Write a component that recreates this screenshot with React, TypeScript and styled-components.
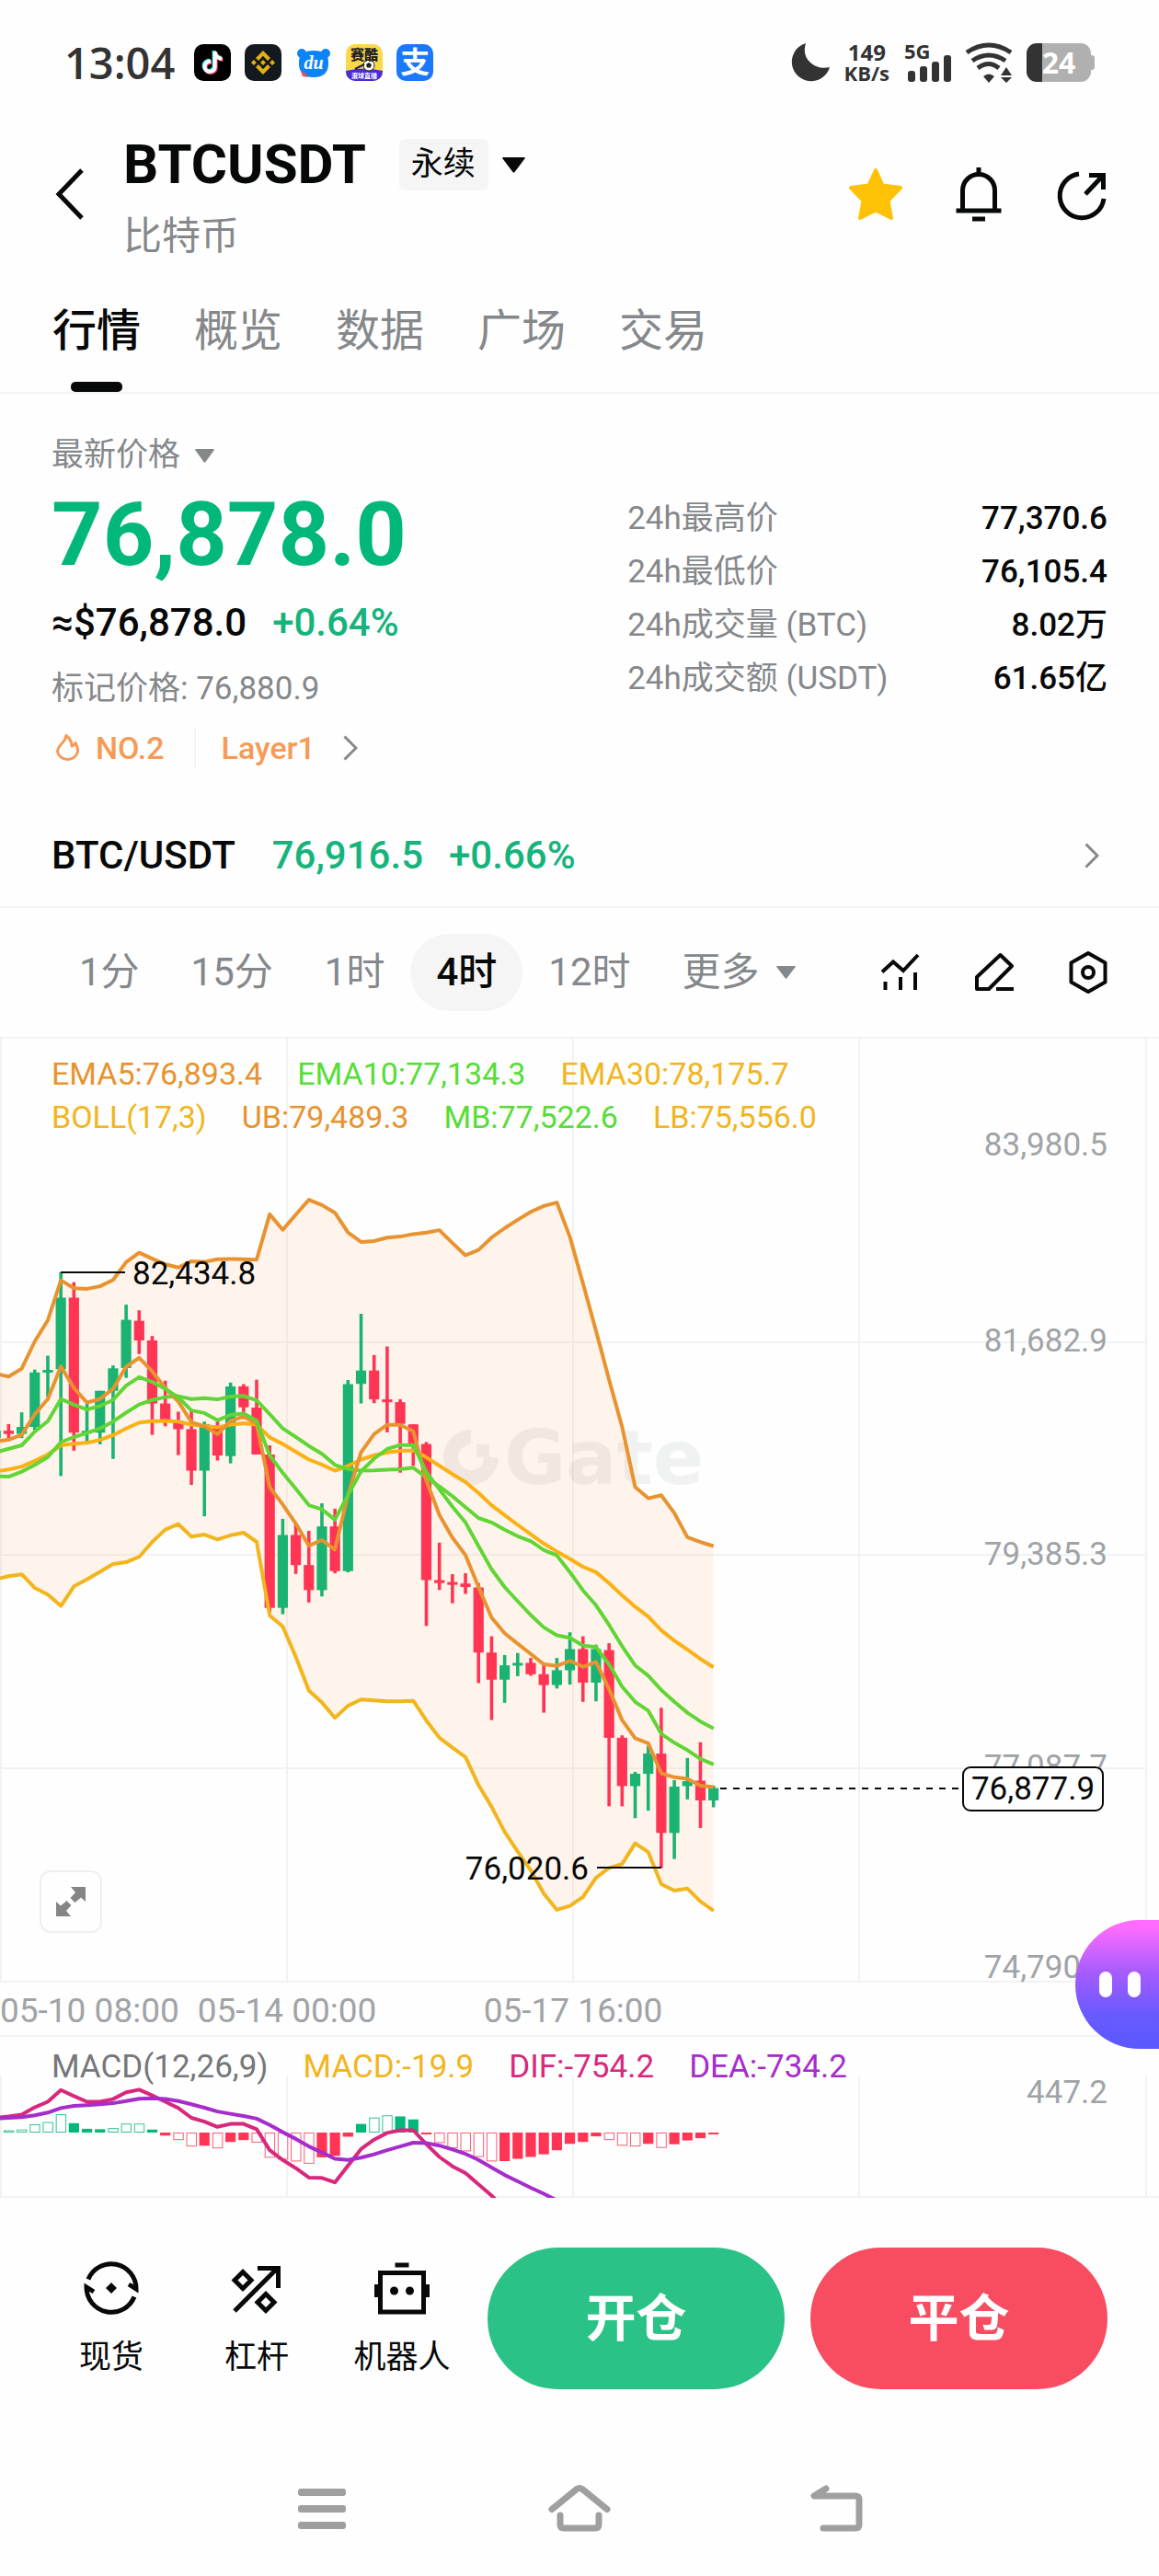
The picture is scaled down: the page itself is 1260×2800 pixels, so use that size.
import React, { useState } from "react";
import styled, { createGlobalStyle } from "styled-components";
import { FaTiktok } from "react-icons/fa";
import { SiBinance } from "react-icons/si";

const FONT = `Roboto, "Noto Sans CJK SC", sans-serif`;

const C = {
  ink: "#070808",
  grey: "#85888b",
  axis: "#a0a3a6",
  line: "#f3f4f4",
  up: "#02b77a",
  upText: "#16b37c",
  upCandle: "#1bb371",
  down: "#ff3553",
  orange: "#f79a55",
  ub: "#e8932f",
  lb: "#f2b51d",
  mid: "#62d536",
  dif: "#d8287c",
  dea: "#a62ccb",
};

const GlobalStyle = createGlobalStyle`
  *, *::before, *::after { box-sizing: border-box; }
  body { margin: 0; background: #fefefe; color: ${C.ink}; font-family: ${FONT}; }
  button, select { font: inherit; color: inherit; background: none; border: 0; margin: 0; padding: 0; cursor: pointer; }
  svg { display: block; flex: none; }
  dl, dd, dt, h1, p { margin: 0; }
`;

const Page = styled.div`
  position: relative;
  display: flex;
  flex-direction: column;
  min-height: 100vh;
`;

/* ---------- status bar ---------- */
const StatusBar = styled.div`
  display: flex;
  align-items: center;
  justify-content: space-between;
  padding: 46px 70px 49px 70px;
  color: #333;
`;
const StatusGroup = styled.div`
  display: flex;
  align-items: center;
  gap: 15px;
  height: 44px;
`;
const Clock = styled.span`
  font: 600 47px/44px "Open Sans", sans-serif;
  padding-right: 6px;
`;
const AppTile = styled.span<{ $bg: string }>`
  position: relative;
  display: flex;
  align-items: center;
  justify-content: center;
  width: 40px;
  height: 40px;
  border-radius: 10px;
  overflow: hidden;
  background: ${(p) => p.$bg};
  color: #fff;
  font: 700 32px/40px ${FONT};
`;
const TikTokLayer = styled(FaTiktok)<{ $shift: number }>`
  position: absolute;
  left: ${(p) => 8 + p.$shift}px;
  top: ${(p) => 8 + p.$shift}px;
`;
const NetSpeed = styled.span`
  display: flex;
  flex-direction: column;
  align-items: center;
  font: 700 24px/22px "Open Sans", sans-serif;
`;
const NetUnit = styled.span`
  font-size: 22px;
`;
const Battery = styled.span`
  position: relative;
  width: 70px;
  height: 42px;
  margin-right: 4px;
  border-radius: 11px;
  background: linear-gradient(90deg, #333 24%, #b0b0b0 24%);
  color: #fff;
  font: 700 32px/42px "Open Sans", sans-serif;
  text-align: center;
  &::after {
    content: "";
    position: absolute;
    right: -4px;
    top: 13px;
    width: 4px;
    height: 16px;
    border-radius: 0 3px 3px 0;
    background: #b0b0b0;
  }
`;

/* ---------- header ---------- */
const Header = styled.header`
  display: flex;
  align-items: center;
  padding: 0 54px 0 60px;
`;
const IconButton = styled.button`
  display: flex;
  align-items: center;
  justify-content: center;
`;
const TitleBlock = styled.div`
  flex: 1;
  display: flex;
  flex-direction: column;
  gap: 12px;
  padding-left: 42px;
`;
const TitleRow = styled.div`
  display: flex;
  align-items: center;
`;
const Title = styled.h1`
  font-size: 60px;
  line-height: 80px;
  font-weight: 700;
`;
const Subtitle = styled.p`
  font-size: 42px;
  line-height: 52px;
  color: ${C.grey};
`;
const Actions = styled.div`
  display: flex;
  gap: 52px;
`;
const Picker = styled.label<{ $chip?: boolean }>`
  display: flex;
  align-items: center;
  gap: 15px;
  color: ${(p) => (p.$chip ? C.ink : C.grey)};
  margin-left: ${(p) => (p.$chip ? 36 : 0)}px;
`;
const PickerSelect = styled.select<{ $chip?: boolean }>`
  appearance: none;
  outline: none;
  font-size: 35px;
  line-height: 40px;
  padding: ${(p) => (p.$chip ? "8px 13px" : "0")};
  border-radius: 6px;
  background: ${(p) => (p.$chip ? "#f5f5f5" : "transparent")};
`;

/* ---------- tabs ---------- */
const Tabs = styled.nav`
  display: flex;
  gap: 58px;
  padding: 0 57px;
  border-bottom: 2px solid ${C.line};
`;
const Tab = styled.button<{ $on: boolean }>`
  position: relative;
  padding: 53px 0 42px;
  font-size: 48px;
  line-height: 48px;
  font-weight: ${(p) => (p.$on ? 500 : 400)};
  color: ${(p) => (p.$on ? C.ink : C.grey)};
  &::after {
    content: "";
    position: absolute;
    left: 50%;
    bottom: 0;
    width: 56px;
    height: 11px;
    margin-left: -28px;
    border-radius: 5px;
    background: ${(p) => (p.$on ? C.ink : "transparent")};
  }
`;

/* ---------- price summary ---------- */
const Summary = styled.section`
  display: grid;
  grid-template-columns: 6fr 5fr;
  padding: 47px 56px 39px;
`;
const PriceColumn = styled.div`
  display: flex;
  flex-direction: column;
  align-items: flex-start;
  gap: 24px;
`;
const BigPrice = styled.p`
  font-size: 97px;
  line-height: 84px;
  font-weight: 700;
  color: ${C.up};
`;
const Quote = styled.p`
  display: flex;
  gap: 28px;
  font-size: 42px;
  line-height: 60px;
  font-weight: 500;
`;
const Gain = styled.span`
  color: ${C.upText};
`;
const MarkPrice = styled.p`
  font-size: 35px;
  line-height: 36px;
  color: ${C.grey};
`;
const RankLink = styled.a`
  display: flex;
  align-items: center;
  font-size: 34px;
  line-height: 44px;
  font-weight: 500;
  color: ${C.orange};
  text-decoration: none;
`;
const RankName = styled.span`
  padding: 0 32px 0 14px;
`;
const Category = styled.span`
  padding: 0 30px 0 28px;
  border-left: 2px solid ${C.line};
`;
const Stats = styled.dl`
  padding-top: 60px;
`;
const StatRow = styled.div`
  display: flex;
  justify-content: space-between;
  font-size: 35px;
  line-height: 58px;
`;
const StatName = styled.dt`
  color: ${C.grey};
`;
const StatValue = styled.dd`
  font-weight: 500;
`;

const PairLink = styled.a`
  display: flex;
  align-items: center;
  padding: 0 65px 0 56px;
  border-bottom: 2px solid ${C.line};
  font-size: 42px;
  line-height: 111px;
  font-weight: 500;
  color: ${C.ink};
  text-decoration: none;
`;
const PairPrice = styled(Gain)`
  padding: 0 28px 0 40px;
`;
const Spacer = styled.span`
  flex: 1;
`;

/* ---------- interval toolbar ---------- */
const Toolbar = styled.div`
  display: flex;
  align-items: center;
  justify-content: space-between;
  padding: 28px 55px 28px 58px;
  border-bottom: 2px solid ${C.line};
`;
const Intervals = styled.div`
  display: flex;
`;
const Interval = styled.button<{ $on: boolean }>`
  display: flex;
  align-items: center;
  gap: 18px;
  padding: 0 28px;
  border-radius: 42px;
  font-size: 42px;
  line-height: 84px;
  white-space: nowrap;
  font-weight: ${(p) => (p.$on ? 500 : 400)};
  color: ${(p) => (p.$on ? C.ink : C.grey)};
  background: ${(p) => (p.$on ? "#f5f5f5" : "transparent")};
`;
const ToolIcons = styled.div`
  display: flex;
  gap: 58px;
`;

/* ---------- chart ---------- */
const ChartArea = styled.section`
  position: relative;
`;
const ChartSvg = styled.svg`
  width: 100%;
  height: auto;
  font-family: ${FONT};
  font-size: 35px;
`;
const Legend = styled.div<{ $top: number; $size: number }>`
  position: absolute;
  top: ${(p) => p.$top}px;
  left: 56px;
  font-size: ${(p) => p.$size}px;
  line-height: 47px;
`;
const LegendRow = styled.div`
  display: flex;
  gap: 38px;
`;
const LegendItem = styled.span<{ $color: string }>`
  color: ${(p) => p.$color};
`;
const ExpandButton = styled.button`
  position: absolute;
  left: 43px;
  bottom: 113px;
  width: 68px;
  height: 68px;
  display: flex;
  align-items: center;
  justify-content: center;
  border: 2px solid #eeefef;
  border-radius: 12px;
  background: #fefefe;
`;
const Assistant = styled.button`
  position: absolute;
  z-index: 1;
  right: 0;
  bottom: -13px;
  display: flex;
  align-items: center;
  gap: 17px;
  width: 91px;
  height: 140px;
  padding-left: 26px;
  border-radius: 70px 0 0 70px;
  background: linear-gradient(180deg, #ff6cff 5%, #a35bff 42%, #6a5aff 72%, #5a58ff 100%);
`;
const Eye = styled.span`
  width: 14px;
  height: 28px;
  border-radius: 7px;
  background: #fff;
`;

/* ---------- bottom ---------- */
const TradeBar = styled.div`
  display: flex;
  align-items: center;
  padding: 54px 56px 60px 42px;
`;
const Shortcut = styled.button`
  width: 158px;
  display: flex;
  flex-direction: column;
  align-items: center;
  gap: 26px;
  font-size: 35px;
  line-height: 40px;
`;
const TradeButtons = styled.div`
  flex: 1;
  display: flex;
  gap: 28px;
  padding-left: 14px;
`;
const TradeButton = styled.button<{ $bg: string }>`
  flex: 1;
  border-radius: 77px;
  background: ${(p) => p.$bg};
  color: #fff;
  font-size: 55px;
  line-height: 154px;
  font-weight: 700;
`;
const SystemNav = styled.nav`
  display: flex;
  justify-content: center;
  gap: 210px;
  padding: 43px 0;
`;

/* ---------- small drawings ---------- */
const Triangle = ({ w, h }: { w: number; h: number }) => (
  <svg width={w} height={h} viewBox="0 0 24 16" preserveAspectRatio="none" fill="currentColor">
    <path d="M1 0H23Q24.5 0 23.5 1.5L12.8 15.4Q12 16.3 11.200 15.4L.5 1.500Q-.5 0 1 0Z" />
  </svg>
);
const ChevronRight = () => (
  <svg width="16" height="28" viewBox="0 0 16 28" fill="none" stroke={C.grey} strokeWidth="3">
    <path d="M1.500 1.500L14 14L1.500 26.500" />
  </svg>
);

/* ---------- chart data ---------- */
const CHART_H = 1085;
const PLOT_TOP = 131;
const EARLY = 0.3444;
const LATE = 0.5357;
const xAt = (i: number) => 9.4 + i * 14.19;
const scaled = (k: number, v: number[]) => v.map((n) => PLOT_TOP + n * k);

/* rising flag, then high, body top, body bottom and low */
type Candle = [up: 0 | 1, high: number, top: number, bottom: number, low: number];
const earlyCandles: Candle[] = [
  [1, 857, 857, 880, 880], [0, 836, 857, 867, 890], [1, 799, 845, 867, 880], [1, 664, 673, 845, 855],
  [1, 620, 665, 673, 750], [1, 357, 437, 663, 1000], [0, 388, 437, 863, 920], [1, 772, 857, 863, 892],
  [1, 731, 731, 863, 900], [1, 651, 660, 731, 946], [1, 459, 507, 659, 690], [0, 477, 510, 572, 615],
  [0, 558, 572, 771, 870], [0, 699, 771, 826, 843], [0, 797, 826, 852, 934], [0, 790, 852, 983, 1028],
  [1, 828, 836, 983, 1127], [0, 826, 840, 935, 951], [1, 705, 717, 937, 960], [0, 710, 717, 783, 820],
  [0, 696, 784, 932, 932], [0, 903, 932, 1416, 1430], [1, 1135, 1186, 1416, 1436], [0, 1150, 1186, 1281, 1309],
  [0, 1173, 1281, 1360, 1399], [1, 1086, 1159, 1360, 1380], [0, 1103, 1159, 1300, 1307], [1, 697, 710, 1300, 1304],
  [1, 488, 667, 709, 771], [0, 618, 667, 758, 770], [0, 591, 758, 767, 862],
];
const lateCandles: Candle[] = [
  [0, 487, 493, 537, 636], [0, 538, 538, 578, 622], [0, 574, 578, 854, 947], [0, 778, 854, 860, 874],
  [0, 842, 858, 863, 901], [0, 840, 861, 868, 882], [0, 860, 869, 1001, 1063], [0, 968, 1001, 1056, 1138],
  [1, 1006, 1027, 1056, 1103], [1, 1002, 1022, 1027, 1049], [0, 1012, 1022, 1045, 1048], [0, 1022, 1045, 1067, 1123],
  [1, 1012, 1037, 1067, 1074], [1, 960, 994, 1037, 1066], [0, 968, 994, 1062, 1101], [1, 985, 994, 1062, 1100],
  [0, 982, 996, 1174, 1313], [0, 1169, 1174, 1272, 1313], [1, 1243, 1247, 1272, 1337], [1, 1190, 1206, 1247, 1322],
  [0, 1113, 1206, 1367, 1438], [1, 1260, 1273, 1367, 1420], [1, 1215, 1262, 1272, 1299], [0, 1183, 1261, 1301, 1357],
  [1, 1271, 1276, 1301, 1315],
];
const toPlot = (k: number) => ([up, ...v]: Candle) => ({ up, y: scaled(k, v) });
const candles = [...earlyCandles.map(toPlot(EARLY)), ...lateCandles.map(toPlot(LATE))];

/* every series starts one interval before the left edge */
const series = {
  ub: [
    ...scaled(EARLY, [677, 686, 661, 575, 508, 382, 407, 409, 401, 381, 325, 295, 314, 332, 342, 322, 324, 316, 315, 316, 317, 174, 223, 175, 128, 145, 169, 231, 261, 258]),
    ...scaled(LATE, [159, 157, 152, 149, 144, 170, 195, 184, 159, 140, 123, 107, 95, 88, 158, 252, 348, 447, 543, 665, 688, 682, 718, 767, 777, 785]),
  ],
  lb: [
    ...scaled(EARLY, [1326, 1316, 1310, 1353, 1374, 1410, 1348, 1326, 1302, 1278, 1272, 1255, 1208, 1169, 1152, 1191, 1185, 1200, 1187, 1179, 1208, 1440, 1475, 1571, 1677, 1715, 1763, 1725, 1705, 1708]),
    ...scaled(LATE, [1100, 1100, 1099, 1139, 1174, 1194, 1213, 1270, 1314, 1365, 1405, 1443, 1490, 1523, 1515, 1497, 1458, 1438, 1430, 1388, 1406, 1471, 1484, 1480, 1506, 1525]),
  ],
  ema5: [
    ...scaled(EARLY, [891, 885, 870, 805, 757, 654, 722, 768, 757, 725, 655, 627, 670, 722, 765, 830, 843, 868, 826, 812, 835, 1035, 1090, 1150, 1220, 1202, 1232, 1060, 925, 868]),
    ...scaled(LATE, [539, 539, 552, 652, 722, 768, 803, 868, 930, 962, 983, 1004, 1025, 1028, 1018, 1030, 1020, 1075, 1138, 1175, 1185, 1246, 1254, 1257, 1271, 1274]),
  ],
  ema10: [
    ...scaled(EARLY, [925, 914, 903, 860, 827, 757, 775, 790, 779, 760, 715, 688, 703, 725, 752, 793, 801, 824, 807, 803, 825, 935, 990, 1040, 1092, 1105, 1138, 1060, 985, 945]),
    ...scaled(LATE, [588, 580, 580, 635, 670, 705, 737, 785, 832, 868, 897, 925, 950, 966, 971, 987, 990, 1025, 1070, 1101, 1119, 1166, 1184, 1199, 1217, 1228]),
  ],
  mb: [
    ...scaled(EARLY, [1001, 1002, 986, 965, 940, 893, 877, 864, 850, 828, 800, 774, 760, 751, 748, 757, 754, 758, 749, 747, 761, 805, 850, 877, 905, 930, 965, 978, 983, 982]),
    ...scaled(LATE, [630, 629, 626, 646, 664, 684, 706, 728, 737, 752, 765, 775, 793, 804, 838, 875, 905, 945, 988, 1027, 1048, 1077, 1101, 1123, 1141, 1155]),
  ],
  ema30: [
    ...scaled(EARLY, [986, 979, 970, 952, 932, 903, 898, 895, 886, 871, 850, 831, 827, 826, 828, 838, 842, 846, 838, 833, 838, 878, 899, 923, 948, 964, 983, 968, 948, 935]),
    ...scaled(LATE, [595, 592, 591, 605, 622, 639, 655, 677, 702, 722, 742, 761, 780, 796, 811, 827, 838, 860, 885, 908, 928, 956, 977, 995, 1014, 1031]),
  ],
};
const toPoints = (ys: number[]) => ys.map((y, i) => `${xAt(i - 1).toFixed(1)},${y.toFixed(1)}`);
const band = [...toPoints(series.ub), ...toPoints(series.lb).reverse()].join(" ");

const GRID_X = [1, 312, 623, 934, 1246];
const AXIS = [
  { label: "83,980.5", y: 115 },
  { label: "81,682.9", y: 328, line: 330 },
  { label: "79,385.3", y: 560, line: 561 },
  { label: "77,087.7", y: 791, line: 793 },
  { label: "74,790.1", y: 1009, line: 1025 },
];

/* signed height, then 1 for a filled bar or 0 for an outlined one */
const macdBars: [number, 0 | 1][] = [
  [6, 0], [8, 0], [22, 0], [28, 0], [49, 0], [25, 1], [10, 1], [9, 1], [12, 0], [24, 0], [24, 0], [8, 1],
  [-8, 1], [-20, 0], [-37, 0], [-35, 1], [-42, 0], [-25, 1], [-20, 1], [-27, 0], [-67, 0], [-72, 0], [-77, 0],
  [-83, 0], [-66, 1], [-62, 1], [-11, 1], [23, 1], [40, 0], [46, 0], [43, 1], [35, 1], [-3, 1], [-28, 0],
  [-42, 0], [-50, 0], [-65, 0], [-77, 0], [-76, 1], [-70, 1], [-65, 1], [-58, 1], [-47, 1], [-30, 1], [-25, 1],
  [-10, 1], [-20, 0], [-35, 0], [-37, 0], [-30, 1], [-41, 0], [-31, 1], [-21, 1], [-15, 1], [-5, 1],
];
const macdScale = (v: number[]) => v.map((n) => n / 2.45 - 454);
const dif = macdScale([1328, 1324, 1319, 1300, 1285, 1254, 1270, 1285, 1285, 1278, 1260, 1253, 1268, 1285, 1302, 1328, 1338, 1352, 1344, 1344, 1358, 1414, 1440, 1462, 1487, 1488, 1500, 1455, 1411, 1386, 1368, 1361, 1361, 1398, 1432, 1457, 1475, 1505, 1535, 1570]);
const dea = macdScale([1330, 1328, 1326, 1321, 1314, 1302, 1296, 1294, 1292, 1289, 1283, 1277, 1276, 1278, 1283, 1292, 1301, 1311, 1317, 1323, 1330, 1347, 1366, 1384, 1404, 1420, 1437, 1440, 1434, 1425, 1414, 1404, 1394, 1395, 1402, 1412, 1424, 1440, 1460, 1480, 1497, 1514, 1530, 1548, 1566]);

const Line = ({ ys, color }: { ys: number[]; color: string }) => (
  <polyline points={toPoints(ys).join(" ")} fill="none" stroke={color} strokeWidth="4" strokeLinejoin="round" />
);

const CandleChart = () => (
  <ChartSvg viewBox={`0 0 1260 ${CHART_H}`} role="img" aria-label="BTCUSDT 4时 K线">
    <g stroke="#f1f2f2" strokeWidth="2">
      {GRID_X.map((x) => <path key={x} d={`M${x} 0V1025`} />)}
      {AXIS.map((a) => a.line && <path key={a.label} d={`M0 ${a.line}H1246`} />)}
      <path d={`M0 ${CHART_H - 1}H1260`} />
    </g>
    <polygon points={band} fill="#ff9a40" fillOpacity="0.1" />
    <g fill="#8b9696" fillOpacity="0.12">
      <path d="M512 425A30 30 0 1 0 542 455H526A14 14 0 1 1 512 441Z" />
      <path d="M518 441H532V455H518Z" />
      <text x="548" y="484" fontFamily="DejaVu Sans" fontWeight="700" fontSize="82">Gate</text>
    </g>
    {candles.map(({ up, y: [high, top, bottom, low] }, i) => {
      const x = xAt(i - 1);
      return (
        <g key={i} fill={up ? C.upCandle : C.down}>
          <rect x={x - 1.8} y={high} width="3.600" height={low - high} />
          <rect x={x - 5.6} y={top} width="11.200" height={Math.max(3, bottom - top)} />
        </g>
      );
    })}
    <Line ys={series.ub} color={C.ub} />
    <Line ys={series.lb} color={C.lb} />
    <Line ys={series.ema30} color="#fbb014" />
    <Line ys={series.mb} color={C.mid} />
    <Line ys={series.ema5} color={C.ub} />
    <Line ys={series.ema10} color={C.mid} />
    <g fill={C.axis} textAnchor="end">
      {AXIS.map((a) => <text key={a.label} x="1204" y={a.y + 12}>{a.label}</text>)}
    </g>
    <g fill={C.axis} fontSize="37">
      <text x="0" y="1069">05-10 08:00</text>
      <text x="312" y="1069" textAnchor="middle">05-14 00:00</text>
      <text x="623" y="1069" textAnchor="middle">05-17 16:00</text>
    </g>
    <g stroke={C.ink} strokeWidth="2">
      <path d="M66 254H136" />
      <path d="M649 901H719" />
      <path d="M783 815H1046" strokeDasharray="7 7" />
      <rect x="1047" y="792" width="152" height="47" rx="8" fill="#fefefe" />
    </g>
    <g fill={C.ink}>
      <text x="144" y="267">82,434.8</text>
      <text x="640" y="914" textAnchor="end">76,020.6</text>
      <text x="1123" y="827" textAnchor="middle">76,877.9</text>
    </g>
  </ChartSvg>
);

const MacdChart = () => (
  <ChartSvg viewBox="0 0 1260 175" role="img" aria-label="MACD">
    <g stroke="#f1f2f2" strokeWidth="2">
      {GRID_X.map((x) => <path key={x} d={`M${x} 42V174`} />)}
      <path d="M0 174H1260" />
    </g>
    {macdBars.map(([v, filled], i) => {
      const color = v > 0 ? C.up : C.down;
      const h = Math.abs(v) / 2.45;
      const y = v > 0 ? 104 - h : 104;
      return filled ? (
        <rect key={i} x={xAt(i) - 5.6} y={y} width="11.200" height={Math.max(2, h)} fill={color} />
      ) : (
        <rect key={i} x={xAt(i) - 5} y={y + 0.5} width="10.400" height={Math.max(1, h - 1)} fill="#fefefe" stroke={color} strokeOpacity="0.8" />
      );
    })}
    <Line ys={dif} color={C.dif} />
    <Line ys={dea} color={C.dea} />
    <text x="1204" y="72" textAnchor="end" fill={C.axis}>447.2</text>
  </ChartSvg>
);

const TABS = ["行情", "概览", "数据", "广场", "交易"];
const STATS = [
  ["24h最高价", "77,370.6"],
  ["24h最低价", "76,105.4"],
  ["24h成交量 (BTC)", "8.02万"],
  ["24h成交额 (USDT)", "61.65亿"],
];
const INTERVALS = ["1分", "15分", "1时", "4时", "12时"];

export default function App() {
  const [tab, setTab] = useState("行情");
  const [interval, setInterval] = useState("4时");

  return (
    <Page>
      <GlobalStyle />

      <StatusBar>
        <StatusGroup>
          <Clock>13:04</Clock>
          <AppTile $bg="#000">
            <TikTokLayer size={24} color="#25f4ee" $shift={-1} />
            <TikTokLayer size={24} color="#fe2c55" $shift={1} />
            <TikTokLayer size={24} color="#fff" $shift={0} />
          </AppTile>
          <AppTile $bg="#14191f"><SiBinance size={26} color="#e5b012" /></AppTile>
          <AppTile $bg="#fff">
            <svg width="40" height="40" viewBox="0 0 40 40">
              <circle cx="7" cy="10" r="5" fill="#0b84f8" />
              <circle cx="33" cy="10" r="5" fill="#0b84f8" />
              <path d="M4 19Q4 7 20 7T36 19Q37 36 20 36T4 19Z" fill="#0b84f8" />
              <path d="M6 29Q12 31 14 36L8 35Z" fill="#e8505b" />
              <text x="20" y="27" textAnchor="middle" fill="#fff" fontFamily="Liberation Serif" fontStyle="italic" fontWeight="700" fontSize="20">du</text>
            </svg>
          </AppTile>
          <AppTile $bg="#fbd84b">
            <svg width="40" height="40" viewBox="0 0 40 40">
              <path d="M0 29Q20 24 40 29V40H0Z" fill="#4a2bd8" />
              <circle cx="25" cy="23" r="6" fill="#fff" stroke="#222" />
              <path d="M25 20L28 22L27 25.500H23L22 22Z" fill="#222" />
              <path d="M10 27L20 22" stroke="#222" strokeWidth="2" />
              <text x="20" y="17" textAnchor="middle" fill="#222" fontFamily="Noto Sans CJK SC" fontWeight="900" fontSize="15">赛酷</text>
              <text x="20" y="37" textAnchor="middle" fill="#fff" fontFamily="Noto Sans CJK SC" fontWeight="700" fontSize="7">滚球直播</text>
            </svg>
          </AppTile>
          <AppTile $bg="#1b78fb">支</AppTile>
        </StatusGroup>
        <StatusGroup>
          <svg width="44" height="44" viewBox="0 0 44 44" fill="#333"><path d="M17 1A21 21 0 1 0 43 27Q31 30 22 22T17 1Z" /></svg>
          <NetSpeed>149<NetUnit>KB/s</NetUnit></NetSpeed>
          <svg width="52" height="60" viewBox="0 -8 52 60" fill="#333">
            <text x="1" y="18" fontFamily="Open Sans" fontWeight="700" fontSize="22">5G</text>
            <rect x="5" y="31" width="8" height="12" rx="3" />
            <rect x="18" y="26" width="8" height="17" rx="3" />
            <rect x="31" y="21" width="8" height="22" rx="3" />
            <rect x="44" y="14" width="8" height="29" rx="3" />
          </svg>
          <svg width="52" height="44" viewBox="0 0 52 44" fill="none" stroke="#333" strokeWidth="5">
            <path d="M2 11Q26 -5 50 11M8 20Q26 8 44 20M14 28Q26 19 37 28" />
            <path d="M20 37Q26 32 32 37L26 44Z" fill="#333" stroke="none" />
            <path d="M39 36L45 27L51 36ZM39 38L45 44L51 38Z" fill="#333" stroke="none" />
          </svg>
          <Battery>24</Battery>
        </StatusGroup>
      </StatusBar>

      <Header>
        <IconButton aria-label="返回">
          <svg width="32" height="56" viewBox="0 0 32 56" fill="none" stroke={C.ink} strokeWidth="5"><path d="M29 2L4 28L29 54" /></svg>
        </IconButton>
        <TitleBlock>
          <TitleRow>
            <Title>BTCUSDT</Title>
            <Picker $chip>
              <PickerSelect $chip aria-label="合约类型"><option>永续</option></PickerSelect>
              <Triangle w={25} h={17} />
            </Picker>
          </TitleRow>
          <Subtitle>比特币</Subtitle>
        </TitleBlock>
        <Actions>
          <IconButton aria-label="收藏">
            <svg width="60" height="60" viewBox="0 0 60 60" fill="#ffc105" stroke="#ffc105" strokeWidth="4" strokeLinejoin="round">
              <path d="M30 4L37.500 20.500L57 23L43.500 37L47 56L30 47.500L13 56L16.500 37L3 23L22.500 20.500Z" />
            </svg>
          </IconButton>
          <IconButton aria-label="提醒">
            <svg width="60" height="60" viewBox="0 0 60 60" fill="none" stroke={C.ink} strokeWidth="5">
              <path d="M12.500 47V26A17.500 17.500 0 0 1 47.500 26V47M5.500 48H54.500M30 1V9M23 57H37" />
            </svg>
          </IconButton>
          <IconButton aria-label="分享">
            <svg width="60" height="60" viewBox="0 0 60 60" fill="none" stroke={C.ink} strokeWidth="5">
              <path d="M27 8A24 24 0 1 0 54 35M34 30L52 11M38 9.500H53.500V25" />
            </svg>
          </IconButton>
        </Actions>
      </Header>

      <Tabs>
        {TABS.map((t) => <Tab key={t} $on={t === tab} onClick={() => setTab(t)}>{t}</Tab>)}
      </Tabs>

      <Summary>
        <PriceColumn>
          <Picker>
            <PickerSelect aria-label="价格类型"><option>最新价格</option></PickerSelect>
            <Triangle w={21} h={15} />
          </Picker>
          <BigPrice>76,878.0</BigPrice>
          <Quote>≈$76,878.0<Gain>+0.64%</Gain></Quote>
          <MarkPrice>标记价格: 76,880.9</MarkPrice>
          <RankLink href="#rank">
            <svg width="34" height="32" viewBox="0 0 34 32" fill="none" stroke={C.orange} strokeWidth="3" strokeLinejoin="round">
              <path d="M16 2.500Q22 7 22 14Q25 13 26 10.500Q29 16 28.500 20A11.200 10.500 0 0 1 6.500 20Q7 15 11.500 11Q14.500 8 16 2.500Z" />
            </svg>
            <RankName>NO.2</RankName>
            <Category>Layer1</Category>
            <ChevronRight />
          </RankLink>
        </PriceColumn>
        <Stats>
          {STATS.map(([k, v]) => (
            <StatRow key={k}><StatName>{k}</StatName><StatValue>{v}</StatValue></StatRow>
          ))}
        </Stats>
      </Summary>

      <PairLink href="#spot">
        BTC/USDT<PairPrice>76,916.5</PairPrice><Gain>+0.66%</Gain>
        <Spacer />
        <ChevronRight />
      </PairLink>

      <Toolbar>
        <Intervals>
          {INTERVALS.map((t) => <Interval key={t} $on={t === interval} onClick={() => setInterval(t)}>{t}</Interval>)}
          <Interval $on={false} aria-haspopup="menu">更多<Triangle w={21} h={14} /></Interval>
        </Intervals>
        <ToolIcons>
          <IconButton aria-label="指标">
            <svg width="44" height="48" viewBox="0 -2 44 48" fill="none" stroke={C.ink} strokeWidth="4">
              <path d="M2 21.500L14 10.500L25 20L41 3M5.500 32V41M22 27V41M38 22V41" />
            </svg>
          </IconButton>
          <IconButton aria-label="画线">
            <svg width="44" height="48" viewBox="0 -2 44 48" fill="none" stroke={C.ink} strokeWidth="4" strokeLinejoin="round">
              <path d="M28.500 3L41 15L16 40H3V27ZM24 40H43" />
            </svg>
          </IconButton>
          <IconButton aria-label="设置">
            <svg width="44" height="48" viewBox="0 0 44 48" fill="none" stroke={C.ink} strokeWidth="4" strokeLinejoin="round">
              <path d="M22 3L40.500 13.500V34.500L22 45L3.500 34.500V13.500Z" /><circle cx="22" cy="24" r="6" />
            </svg>
          </IconButton>
        </ToolIcons>
      </Toolbar>

      <ChartArea>
        <CandleChart />
        <Legend $top={15} $size={34}>
          <LegendRow>
            <LegendItem $color={C.ub}>EMA5:76,893.4</LegendItem>
            <LegendItem $color="#56dd36">EMA10:77,134.3</LegendItem>
            <LegendItem $color={C.lb}>EMA30:78,175.7</LegendItem>
          </LegendRow>
          <LegendRow>
            <LegendItem $color={C.lb}>BOLL(17,3)</LegendItem>
            <LegendItem $color={C.ub}>UB:79,489.3</LegendItem>
            <LegendItem $color="#56dd36">MB:77,522.6</LegendItem>
            <LegendItem $color={C.lb}>LB:75,556.0</LegendItem>
          </LegendRow>
        </Legend>
        <ExpandButton aria-label="全屏">
          <svg width="34" height="34" viewBox="0 0 34 34" fill="#858585">
            <path d="M17 1H33V17L28 12.500L21.500 18L16.500 13L22 7ZM1 17L6 21.500L12.500 16L17.500 21L12 27L17 33H1Z" />
          </svg>
        </ExpandButton>
        <Assistant aria-label="助手"><Eye /><Eye /></Assistant>
      </ChartArea>

      <ChartArea>
        <MacdChart />
        <Legend $top={9} $size={35}>
          <LegendRow>
            <LegendItem $color="#757779">MACD(12,26,9)</LegendItem>
            <LegendItem $color={C.lb}>MACD:-19.9</LegendItem>
            <LegendItem $color={C.dif}>DIF:-754.2</LegendItem>
            <LegendItem $color={C.dea}>DEA:-734.2</LegendItem>
          </LegendRow>
        </Legend>
      </ChartArea>

      <TradeBar>
        <Shortcut>
          <svg width="60" height="60" viewBox="0 0 60 60" fill="none" stroke={C.ink} strokeWidth="5">
            <path d="M5 20.500A27 27 0 0 1 57 31L49 26M55 39.500A27 27 0 0 1 3 29L11 34" />
            <path d="M30 24L36 30L30 36L24 30Z" fill={C.ink} stroke="none" />
          </svg>
          现货
        </Shortcut>
        <Shortcut>
          <svg width="60" height="60" viewBox="0 0 60 60" fill="none" stroke={C.ink} strokeWidth="5">
            <path d="M6 55L52 9M31 8.500H53.500V30M15 12.500L24 21.500L15 30.500L6 21.500ZM40 36.500L49 45.500L40 54.500L31 45.500Z" />
          </svg>
          杠杆
        </Shortcut>
        <Shortcut>
          <svg width="60" height="60" viewBox="0 0 60 60" fill="none" stroke={C.ink} strokeWidth="5">
            <path d="M6.500 13.500H53.500V56H6.500ZM22.500 5H37.500M2.500 26V40M57.500 26V40" />
            <g fill={C.ink} stroke="none"><circle cx="21.500" cy="33" r="4.500" /><circle cx="38.500" cy="33" r="4.500" /></g>
          </svg>
          机器人
        </Shortcut>
        <TradeButtons>
          <TradeButton $bg="#2bc287">开仓</TradeButton>
          <TradeButton $bg="#f84c60">平仓</TradeButton>
        </TradeButtons>
      </TradeBar>

      <SystemNav>
        <IconButton aria-label="最近任务">
          <svg width="70" height="54" viewBox="0 0 70 54" fill="#9f9f9f">
            <rect x="9" y="5" width="52" height="8" rx="3" />
            <rect x="9" y="23" width="52" height="8" rx="3" />
            <rect x="9" y="41" width="52" height="8" rx="3" />
          </svg>
        </IconButton>
        <IconButton aria-label="主页">
          <svg width="70" height="54" viewBox="0 0 70 54" fill="none" stroke="#9f9f9f" strokeWidth="7" strokeLinecap="round" strokeLinejoin="round">
            <path d="M5 27.500L32 5.500Q35 3.500 38 5.500L65 27.500M14 34V44Q14 48 18 48H52Q56 48 56 44V34" />
          </svg>
        </IconButton>
        <IconButton aria-label="后退">
          <svg width="70" height="54" viewBox="0 0 70 54" fill="none" stroke="#9f9f9f" strokeWidth="7" strokeLinecap="round" strokeLinejoin="round">
            <path d="M23 5L10 13H55Q59 13 59 17V44Q59 48 55 48H20" />
          </svg>
        </IconButton>
      </SystemNav>
    </Page>
  );
}
